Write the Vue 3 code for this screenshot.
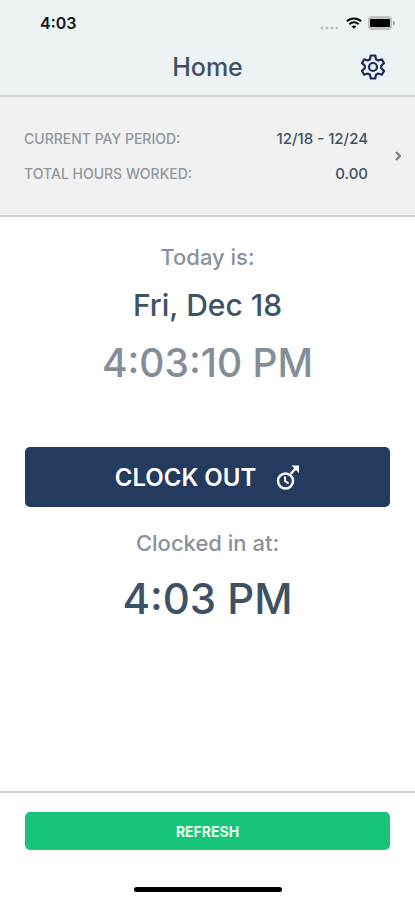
<script setup>
const summary = [
  { label: 'Current pay period:', value: '12/18 - 12/24' },
  { label: 'Total hours worked:', value: '0.00' },
]
</script>

<template>
  <div class="screen">
    <header class="top">
      <div class="status">
        <span class="status-time">4:03</span>
        <div class="status-icons">
          <svg class="dots" width="20" height="4" viewBox="0 0 20 4" aria-hidden="true">
            <circle cx="2" cy="2" r="1.5" /><circle cx="7" cy="2" r="1.5" />
            <circle cx="12" cy="2" r="1.5" /><circle cx="17" cy="2" r="1.5" />
          </svg>
          <svg width="16" height="12" viewBox="0 0 16 12" fill="none" stroke="#080a0c" stroke-width="2" aria-hidden="true">
            <path d="M.8 4.3a10.4 10.4 0 0 1 14.4 0" />
            <path d="M3.4 7.2a6.6 6.6 0 0 1 9.2 0" />
            <path d="M8 11.8 5.7 9.5a3.3 3.3 0 0 1 4.6 0Z" fill="#080a0c" stroke="none" />
          </svg>
          <svg width="27" height="14" viewBox="0 0 27 14" aria-hidden="true">
            <rect x="0" y="0" width="24" height="14" rx="4" fill="#bfc2c3" />
            <path d="M25 4.500q2 1 2 2.500t-2 2.500Z" fill="#a4a7a8" />
            <rect x="2" y="3" width="20" height="8" rx="1" fill="#030405" />
          </svg>
        </div>
      </div>
      <div class="nav">
        <h1>Home</h1>
        <button class="settings" type="button" aria-label="Settings">
          <svg width="26" height="26" viewBox="-13 -13 26 26" fill="none" stroke="#1b2a63" stroke-width="2.200" stroke-linejoin="round" aria-hidden="true">
            <path d="M-2.200-11.500H2.200L3-7.800 5.200-6.500 8.800-7.700 11-3.900 8.200-1.300V1.300L11 3.900 8.800 7.700 5.200 6.500 3 7.800 2.200 11.500H-2.200L-3 7.800-5.200 6.500-8.800 7.700-11 3.900-8.200 1.300V-1.300L-11-3.900-8.800-7.700-5.200-6.500-3-7.800Z" />
            <circle r="4" />
          </svg>
        </button>
      </div>
    </header>

    <button class="summary" type="button">
      <span class="rows">
        <span v-for="row in summary" :key="row.label" class="row">
          <span class="label">{{ row.label }}</span>
          <span class="value">{{ row.value }}</span>
        </span>
      </span>
      <svg class="chevron" width="6" height="10" viewBox="0 0 6 10" fill="none" stroke="#777b7f" stroke-width="2" aria-hidden="true">
        <path d="m1 1 4 4-4 4" />
      </svg>
    </button>

    <main>
      <p class="caption">Today is:</p>
      <p class="date">Fri, Dec 18</p>
      <p class="now">4:03:10 PM</p>
      <button class="clock-out" type="button">
        <span>CLOCK OUT</span>
        <svg width="24" height="26" viewBox="0 0 24 26" fill="none" stroke="#fff" stroke-width="2" aria-hidden="true">
          <circle cx="9.500" cy="17" r="7.500" stroke-width="2.400" />
          <path d="M9 12.500V17l3.500 2.500" />
          <path d="m14.800 9.800 4.700-5" stroke-width="2.400" />
          <path d="M15.500 1.500H23V9Z" fill="#fff" stroke="none" />
        </svg>
      </button>
      <p class="caption">Clocked in at:</p>
      <p class="clocked">4:03 PM</p>
    </main>

    <footer>
      <button class="refresh" type="button">REFRESH</button>
      <div class="home-bar"></div>
    </footer>
  </div>
</template>

<style>
body {
  margin: 0;
}
</style>

<style scoped>
.screen {
  box-sizing: border-box;
  min-height: 100vh;
  display: flex;
  flex-direction: column;
  background: #fff;
  color: #3e5266;
  font-family: Inter, "Liberation Sans", sans-serif;
}

h1,
p {
  margin: 0;
}

button {
  border: 0;
  padding: 0;
  font: inherit;
  color: inherit;
  cursor: pointer;
}

.top {
  background: #edf2f4;
  border-bottom: 2px solid #d3d6d8;
}

.status {
  display: flex;
  justify-content: space-between;
  align-items: center;
  height: 46px;
  padding: 0 20px 0 40px;
}

.status-time {
  font-size: 16px;
  font-weight: 600;
  color: #111416;
}

.status-icons {
  display: flex;
  align-items: center;
  gap: 6px;
}

.dots {
  align-self: flex-end;
  fill: #bdc1c3;
}

.nav {
  display: grid;
  grid-template-columns: 1fr auto 1fr;
  align-items: center;
  height: 49px;
  padding: 0 29px 8px;
  box-sizing: border-box;
}

h1 {
  grid-column: 2;
  font-size: 25px;
  line-height: 32px;
  font-weight: 500;
}

.settings {
  justify-self: end;
  display: flex;
  background: none;
}

.summary {
  display: flex;
  align-items: center;
  gap: 27px;
  padding: 24px 14px 24px 24px;
  background: #f1f1f1;
  border-bottom: 2px solid #cfcfcf;
  text-align: left;
}

.rows {
  flex: 1;
  display: grid;
}

.row {
  display: flex;
  justify-content: space-between;
  align-items: center;
  height: 35px;
}

.label {
  font-size: 14px;
  font-weight: 500;
  text-transform: uppercase;
  color: #8f969d;
}

.value {
  font-size: 15px;
  font-weight: 500;
}

main {
  flex: 1;
  display: flex;
  flex-direction: column;
  align-items: center;
  padding: 24px 25px;
}

.caption {
  font-size: 22px;
  line-height: 32px;
  font-weight: 500;
  color: #8a929b;
}

.date {
  margin-top: 12px;
  font-size: 30px;
  line-height: 40px;
  font-weight: 500;
}

.now {
  margin-top: 12px;
  font-size: 39px;
  line-height: 52px;
  font-weight: 500;
  color: #858e98;
}

.clock-out {
  display: flex;
  align-items: center;
  justify-content: center;
  gap: 20px;
  width: 100%;
  height: 60px;
  margin: 58px 0 20px;
  border-radius: 5px;
  background: #243a5e;
  color: #fff;
  font-size: 24px;
  font-weight: 600;
}

.clocked {
  margin-top: 12px;
  font-size: 42px;
  line-height: 56px;
  font-weight: 500;
}

footer {
  display: flex;
  flex-direction: column;
  align-items: center;
  gap: 37px;
  padding: 19px 25px 8px;
  border-top: 2px solid #d3d3d3;
}

.refresh {
  width: 100%;
  height: 38px;
  border-radius: 5px;
  background: #18c47a;
  color: #e6fbf0;
  font-size: 14px;
  font-weight: 700;
}

.home-bar {
  width: 148px;
  height: 5px;
  border-radius: 3px;
  background: #000;
}
</style>
